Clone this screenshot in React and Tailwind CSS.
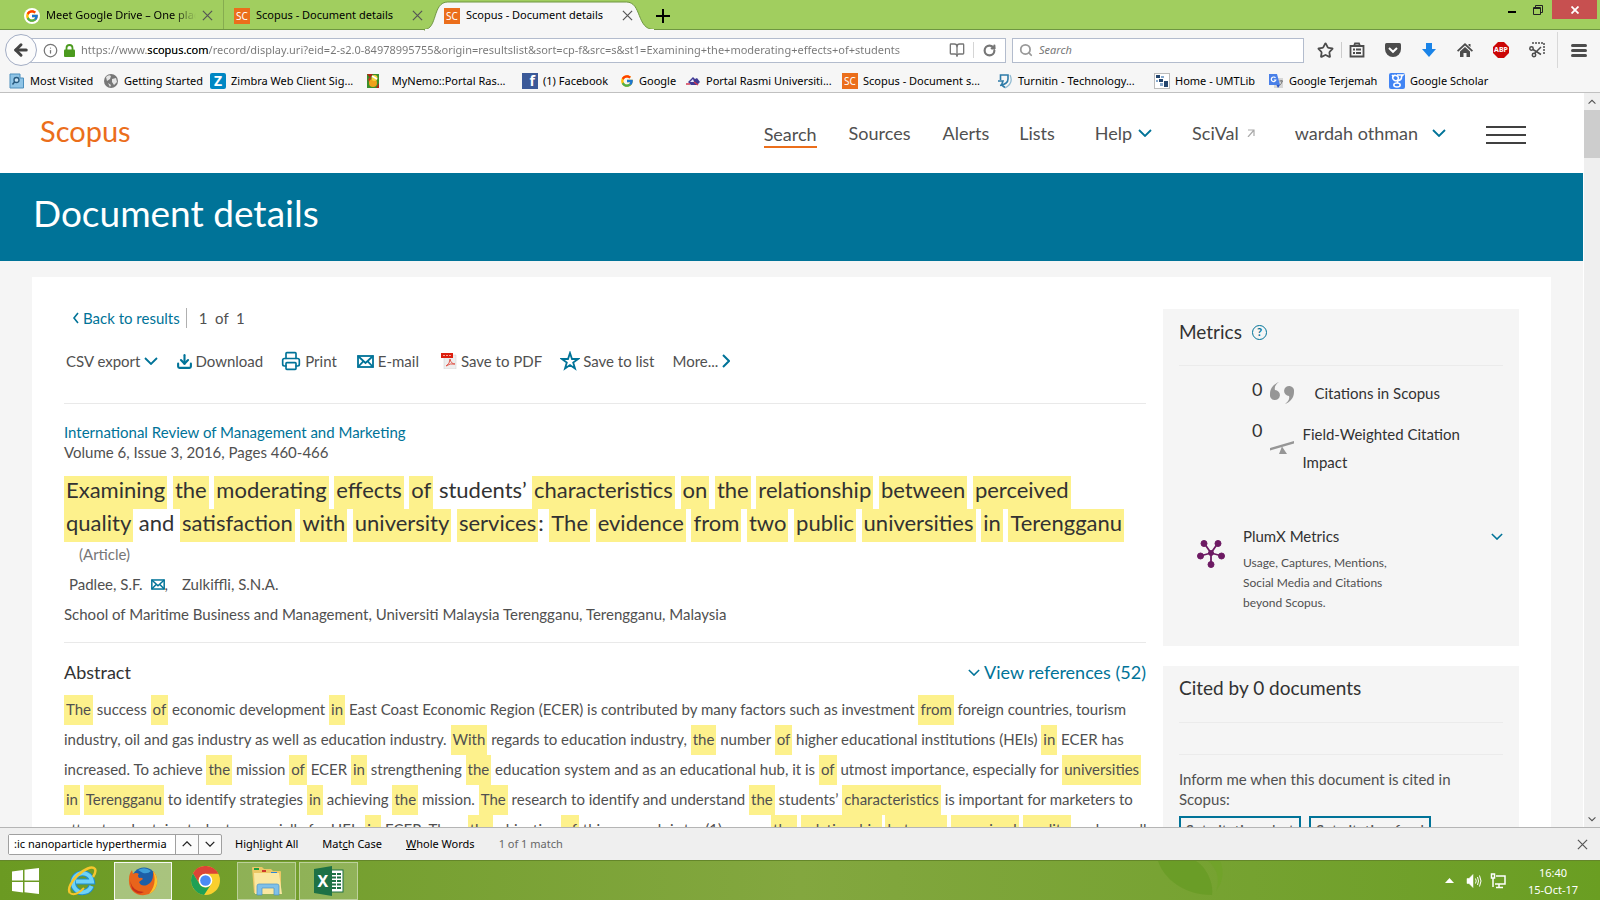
import React from 'react';
import { Star, ArrowLeft, Printer, Download, RotateCw, Search, BookOpen, Info } from 'lucide-react';
import { FcGoogle } from 'react-icons/fc';

const TEAL = '#007398';

const bookmarks = [
  { icon: 'visited', label: 'Most Visited', width: 'w-[94px]' },
  { icon: 'globe', label: 'Getting Started', width: 'w-[107px]' },
  { icon: 'zimbra', label: 'Zimbra Web Client Sig...', width: 'w-[155px]' },
  { icon: 'nemo', label: '\u00a0 MyNemo::Portal Ras...', width: 'w-[157px]' },
  { icon: 'facebook', label: '(1) Facebook', width: 'w-[98px]' },
  { icon: 'google', label: 'Google', width: 'w-[65px]' },
  { icon: 'portal', label: 'Portal Rasmi Universiti...', width: 'w-[157px]' },
  { icon: 'scopus', label: 'Scopus - Document s...', width: 'w-[155px]' },
  { icon: 'turnitin', label: 'Turnitin - Technology...', width: 'w-[157px]' },
  { icon: 'umt', label: 'Home - UMTLib', width: 'w-[114px]' },
  { icon: 'translate', label: 'Google Terjemah', width: 'w-[121px]' },
  { icon: 'scholar', label: 'Google Scholar', width: 'w-[101px]' },
];

// words in [brackets] are search hits
const titleLines = [
  '[Examining] [the] [moderating] [effects] [of] students’ [characteristics] [on] [the] [relationship] [between] [perceived]',
  '[quality] and [satisfaction] [with] [university] [services]: [The] [evidence] [from] [two] [public] [universities] [in] [Terengganu]',
];

const abstractLines = [
  '[The] success [of] economic development [in] East Coast Economic Region (ECER) is contributed by many factors such as investment [from] foreign countries, tourism',
  'industry, oil and gas industry as well as education industry. [With] regards to education industry, [the] number [of] higher educational institutions (HEIs) [in] ECER has',
  'increased. To achieve [the] mission [of] ECER [in] strengthening [the] education system and as an educational hub, it is [of] utmost importance, especially for [universities]',
  '[in] [Terengganu] to identify strategies [in] achieving [the] mission. [The] research to identify and understand [the] students’ [characteristics] is important for marketers to',
  'attract and retain students especially for HEIs [in] ECER. Thus, [the] objective [of] this research is to: (1) assess [the] [relationship] [between] [perceived] [quality] and overall',
];

function Highlighted({ text, pad }) {
  return text.split(/(\[[^\]]+\])/).map((part, i) =>
    part.startsWith('[') ? (
      <mark key={i} className={`inline-block bg-[#fdf18c] px-[2px] text-inherit ${pad}`}>{part.slice(1, -1)}</mark>
    ) : (
      <span key={i}>{part}</span>
    )
  );
}

function Chevron({ className = 'w-[14px] h-2', dir = 'down', color = TEAL }) {
  const d = { down: 'M1 1 L7 7 L13 1', up: 'M1 7 L7 1 L13 7' }[dir];
  return (
    <svg className={`shrink-0 ${className}`} viewBox="0 0 14 8" fill="none" stroke={color} strokeWidth="1.800">
      <path d={d} />
    </svg>
  );
}

function SideChevron({ right }) {
  return (
    <svg className="w-2 h-[14px] shrink-0" viewBox="0 0 8 14" fill="none" stroke={TEAL} strokeWidth={right ? 2 : 1.6}>
      <path d={right ? 'M1 1 L7 7 L1 13' : 'M6 2 L2 7 L6 12'} />
    </svg>
  );
}

function CloseX({ className = 'w-[11px] h-[11px]', color = '#555' }) {
  return (
    <svg className={`shrink-0 ${className}`} viewBox="0 0 12 12" stroke={color} strokeWidth="1.300">
      <path d="M1 1 L11 11 M11 1 L1 11" />
    </svg>
  );
}

function ScopusIcon() {
  return <span className="flex w-4 h-4 shrink-0 items-center justify-center bg-[#eb6e1b] text-[10px] leading-4 text-white">SC</span>;
}

function MailIcon({ className = 'w-[17px] h-[13px]' }) {
  return (
    <svg className={`shrink-0 ${className}`} viewBox="0 0 17 13" fill="none" stroke={TEAL} strokeWidth="1.800">
      <rect x="1" y="1" width="15" height="11" />
      <path d="M1 1 L8.500 8 L16 1 M1 12 L6.500 6.200 M16 12 L10.500 6.200" />
    </svg>
  );
}

function BookmarkIcon({ name }) {
  switch (name) {
    case 'visited':
      return (
        <svg className="w-4 h-4 shrink-0" viewBox="0 0 16 16">
          <path d="M1 1 H11 V5 H14.500 V15 H1 Z" fill="#8fc4e6" stroke="#4d8fbd" />
          <circle cx="7.500" cy="7" r="2.500" fill="#c5e3f6" stroke="#27597f" strokeWidth="1.300" />
          <path d="M5.700 8.800 L3.500 11.500" stroke="#27597f" strokeWidth="1.500" />
        </svg>
      );
    case 'globe':
      return (
        <svg className="w-4 h-4 shrink-0" viewBox="0 0 16 16">
          <circle cx="8" cy="8" r="7" fill="#777" />
          <path d="M3 4 Q6 1 8 3 L7 6 L4 8 Z M9 6 L13 5 L14 9 L11 12 L9 9 Z M5 10 L8 12 L7 14 Z" fill="#e4e4e4" />
        </svg>
      );
    case 'zimbra':
      return <span className="flex w-4 h-4 shrink-0 items-center justify-center rounded-xs bg-[#0087c3] text-sm leading-4 font-bold text-white">Z</span>;
    case 'nemo':
      return (
        <svg className="w-4 h-4 shrink-0" viewBox="0 0 16 16">
          <rect x="2" y="1" width="12" height="14" fill="#3b8f2b" />
          <path d="M2 1 H8 L5 5 Z M11 15 H14 V10 Z" fill="#b02817" />
          <path d="M3 6 L6 4 L5 12 Z" fill="#c8321c" />
          <circle cx="8" cy="10" r="4" fill="#f0a31b" />
          <circle cx="9.500" cy="5" r="3" fill="#f4d33c" />
          <path d="M7 3 L12 6" stroke="#fff" strokeWidth="1.500" />
        </svg>
      );
    case 'facebook':
      return <span className="flex w-4 h-4 shrink-0 items-center justify-end bg-[#3b5998] pr-[3px] text-sm leading-4 font-bold text-white">f</span>;
    case 'google':
      return <FcGoogle className="w-[14px] h-[14px] shrink-0" />;
    case 'portal':
      return (
        <svg className="w-4 h-4 shrink-0" viewBox="0 0 16 16">
          <path d="M3 9 L8 4 L10 6 L12 5 L15 9 L12 12 H6 Z" fill="#3f3a94" />
          <path d="M5 9 L8 6 L9 9 Z" fill="#e9e6f5" />
          <path d="M1 11 H5 M9 9 L13 12" stroke="#d23a54" strokeWidth="1.500" />
        </svg>
      );
    case 'scopus':
      return <ScopusIcon />;
    case 'turnitin':
      return (
        <svg className="w-4 h-4 shrink-0" viewBox="0 0 16 16" fill="none" stroke="#2e7ba8" strokeWidth="1.600">
          <path d="M3.500 7 V2 H11 V6 Q11 11 3 12.500" />
          <path d="M1 8 H6 L4.500 12 L8 14.500" />
          <path d="M13 2 Q17 10 8 15" stroke="#8fb9d0" strokeWidth="1.200" />
        </svg>
      );
    case 'umt':
      return (
        <svg className="w-4 h-4 shrink-0" viewBox="0 0 16 16">
          <rect x=".5" y=".5" width="15" height="15" fill="#fff" stroke="#bbb" />
          <path d="M2 2 H6 V5 H2 Z M5 6 H9 V9 H5 Z M10 8 H14 V14 H10 Z" fill="#24466e" />
          <path d="M7 3 H10 V5 H7 Z M2 7 H4 V9 H2 Z M6 10 H9 V13 H6 Z" fill="#87a9cd" />
        </svg>
      );
    case 'translate':
      return (
        <svg className="w-4 h-4 shrink-0" viewBox="0 0 16 16">
          <rect x="6" y="5" width="9" height="10" fill="#d6d6d6" />
          <path d="M1 1 H9 L12 12 H1 Z" fill="#4a80e8" />
          <path d="M8.500 12 H12 L10 15 Z" fill="#2a56c6" />
          <path d="M7.500 5 A2.300 2.300 0 1 0 7.800 7 H5.800" fill="none" stroke="#fff" strokeWidth="1.200" />
          <path d="M11.500 8 H15 M13.200 7 V8 M14.300 8 Q13.500 11 11.800 12" fill="none" stroke="#777" />
        </svg>
      );
    default:
      return (
        <svg className="w-4 h-4 shrink-0" viewBox="0 0 16 16">
          <rect width="16" height="16" rx="2" fill="#4285f4" />
          <ellipse cx="6.500" cy="5" rx="3" ry="2.500" transform="rotate(35 6.500 5)" fill="none" stroke="#fff" strokeWidth="1.500" />
          <ellipse cx="8" cy="12" rx="3.200" ry="2" fill="none" stroke="#fff" strokeWidth="1.500" />
          <path d="M8 2 H14 L12.500 3.500 Q13 7 8.500 8 V10 M3 2 L5 4" fill="none" stroke="#fff" strokeWidth="1.500" />
        </svg>
      );
  }
}

function TabBar() {
  return (
    <div className="flex h-[30px] shrink-0 items-stretch bg-[#a1ce5f] text-black">
      <div className="flex flex-1 items-stretch border-b border-[#6f9642]">
        <div className="flex w-56 items-center border-r border-[#86ac50] pl-6 pr-[10px] pt-[2px]">
          <span className="flex w-4 h-4 items-center justify-center rounded-full bg-white">
            <FcGoogle className="w-[14px] h-[14px]" />
          </span>
          <span className="ml-[6px] w-[150px] overflow-hidden whitespace-nowrap bg-linear-to-r from-black from-85% to-transparent bg-clip-text text-transparent">Meet Google Drive – One place</span>
          <button className="ml-auto" aria-label="Close tab"><CloseX /></button>
        </div>
        <div className="flex w-[206px] items-center gap-[6px] pl-[10px] pr-[7px] pt-[2px]">
          <ScopusIcon />
          <span className="whitespace-nowrap">Scopus - Document details</span>
          <button className="ml-auto" aria-label="Close tab"><CloseX /></button>
        </div>
        <div className="relative -mb-px flex w-[226px] items-center gap-[6px] pl-[14px] pr-[23px] pt-px">
          <svg className="absolute inset-0 w-full h-full overflow-visible" viewBox="0 0 228 30" preserveAspectRatio="none">
            <path d="M-6 29.500 C8 29.500 2 2 18 2 H198 C214 2 208 29.500 226 29.500 V30 H-6 Z" fill="#f6f6f6" stroke="#6f9642" />
            <rect x="-5" y="29" width="231" height="2" fill="#f6f6f6" />
          </svg>
          <span className="relative"><ScopusIcon /></span>
          <span className="relative whitespace-nowrap">Scopus - Document details</span>
          <button className="relative ml-auto" aria-label="Close tab"><CloseX /></button>
        </div>
        <button className="flex items-center pt-[2px]" aria-label="New tab">
          <svg className="w-[14px] h-[14px]" viewBox="0 0 14 14" stroke="#000" strokeWidth="2">
            <path d="M7 0 V14 M0 7 H14" />
          </svg>
        </button>
        <div className="ml-auto flex h-[19px] items-center pr-[3px]">
          <button className="flex h-[19px] w-6 items-center justify-center pt-1" aria-label="Minimize">
            <span className="h-[2px] w-2 bg-black" />
          </button>
          <button className="flex w-7 justify-center" aria-label="Restore">
            <svg className="w-[10px] h-[10px]" viewBox="0 0 10 10" fill="none" stroke="#222">
              <path d="M.5 2.500 H7.500 V9.500 H.5 Z M.5 3.500 H7.500 M2.500 2.500 V.5 H9.500 V7.500 H7.500" />
            </svg>
          </button>
          <button className="flex h-[19px] w-[45px] items-center justify-center bg-[#c75050]" aria-label="Close window">
            <svg className="w-2 h-2" viewBox="0 0 8 8" stroke="#fff" strokeWidth="1.800"><path d="M.5 .5 L7.500 7.500 M7.500 .5 L.5 7.500" /></svg>
          </button>
        </div>
      </div>
    </div>
  );
}

function NavBar() {
  return (
    <div className="flex h-10 shrink-0 items-center bg-[#f6f6f6] pl-[5px] pr-[13px]">
      <button className="relative z-10 flex w-8 h-8 shrink-0 items-center justify-center rounded-full border border-[#a3adc4] bg-[#fbfbfb]" aria-label="Back">
        <ArrowLeft className="w-[18px] h-[18px] text-[#444]" strokeWidth={4} />
      </button>
      <div className="-ml-2 flex h-[25px] flex-1 items-center border border-[#b3bccd] bg-white pl-[13px] text-[#767676]">
        <Info className="w-[15px] h-[15px] shrink-0" strokeWidth={2} />
        <svg className="ml-[6px] w-[11px] h-[13px] shrink-0" viewBox="0 0 11 13">
          <rect y="5.500" width="11" height="7.500" rx="1" fill="#4b9a1e" />
          <path d="M2.500 6 V4 A3 3 0 0 1 8.500 4 V6" fill="none" stroke="#4b9a1e" strokeWidth="1.800" />
        </svg>
        <div className="ml-[6px] flex-1 w-0 overflow-hidden whitespace-nowrap bg-linear-to-r from-[#767676] from-96% to-transparent bg-clip-text text-transparent">
          https://www.<span className="text-black">scopus.com</span>/record/display.uri?eid=2-s2.0-84978995755&amp;origin=resultslist&amp;sort=cp-f&amp;src=s&amp;st1=Examining+the+moderating+effects+of+students
        </div>
        <BookOpen className="ml-5 w-4 h-4 shrink-0" />
        <span className="ml-2 h-4 w-px bg-[#d5d5d5]" />
        <button className="px-[9px]" aria-label="Reload"><RotateCw className="w-[13px] h-[13px]" strokeWidth={4} /></button>
      </div>
      <label className="ml-[6px] flex h-[25px] w-[292px] shrink-0 items-center gap-[6px] border border-[#b3bccd] bg-white px-[6px] text-[#999]">
        <Search className="w-[14px] h-[14px]" strokeWidth={3} />
        <input className="flex-1 outline-none placeholder:italic placeholder:text-[#777]" placeholder="Search" aria-label="Search" />
      </label>
      <div className="flex shrink-0 items-center text-[#4c4c4c]">
        <button className="ml-[13px]" aria-label="Bookmark"><Star className="w-[17px] h-[17px]" strokeWidth={2.5} /></button>
        <span className="mx-[7px] h-4 w-px bg-[#ccc]" />
        <button aria-label="Bookmarks list">
          <svg className="w-4 h-4" viewBox="0 0 16 16" fill="none" stroke="currentColor" strokeWidth="1.800">
            <path d="M1.500 4 H14.500 V14.500 H1.500 Z M5 4 L6 1.500 H10 L11 4" />
            <path d="M4 7.500 H6 M7 7.500 H12 M4 11 H6 M7 11 H12" />
          </svg>
        </button>
        <button className="ml-5" aria-label="Pocket">
          <svg className="w-4 h-4" viewBox="0 0 16 16">
            <path d="M1.500 1 H14.500 Q16 1 16 2.500 V7 A8 8 0 0 1 0 7 V2.500 Q0 1 1.500 1 Z" fill="currentColor" />
            <path d="M4 6 L8 9.800 L12 6" fill="none" stroke="#fff" strokeWidth="2" />
          </svg>
        </button>
        <button className="ml-5" aria-label="Downloads">
          <svg className="w-4 h-4" viewBox="0 0 16 16"><path d="M5 1 H11 V7 H15 L8 15 L1 7 H5 Z" fill="#1a84e8" /></svg>
        </button>
        <button className="ml-5" aria-label="Home">
          <svg className="w-4 h-4" viewBox="0 0 16 16" fill="currentColor">
            <path d="M8 1 L16 8.500 L14.800 9.800 L8 3.500 L1.200 9.800 L0 8.500 Z M11.500 2 H13.500 V5 L11.500 3.500 Z" />
            <path d="M3 9.500 L8 5 L13 9.500 V15 H9.500 V11 H6.500 V15 H3 Z" />
          </svg>
        </button>
        <button className="relative ml-5 flex w-4 h-4 items-center justify-center text-[7px] font-bold text-white" aria-label="Adblock Plus">
          <svg className="absolute inset-0 w-4 h-4" viewBox="0 0 16 16"><path d="M5 0 H11 L16 5 V11 L11 16 H5 L0 11 V5 Z" fill="#cb0606" /></svg>
          <span className="relative">ABP</span>
        </button>
        <button className="ml-5" aria-label="Screenshot">
          <svg className="w-4 h-4" viewBox="0 0 16 16" fill="none" stroke="currentColor" strokeWidth="1.500">
            <path d="M3 1 H15 V13" strokeDasharray="2 1" />
            <circle cx="2.500" cy="6.500" r="1.700" />
            <circle cx="5" cy="13" r="1.700" />
            <path d="M4 7.500 L12 12.500 M5.500 11.500 L12 5" />
          </svg>
        </button>
        <span className="ml-3 mr-[13px] h-9 w-px bg-[#d8d8d8]" />
        <button className="flex w-4 flex-col gap-[2px]" aria-label="Menu">
          <span className="h-[3px] rounded-full bg-current" />
          <span className="h-[3px] rounded-full bg-current" />
          <span className="h-[3px] rounded-full bg-current" />
        </button>
      </div>
    </div>
  );
}

function SiteHeader() {
  return (
    <header className="flex h-20 items-center bg-white pl-10 pr-[57px] text-[#505050]">
      <a href="#home" className="pb-1 text-[29px] text-[#eb6e1b]">Scopus</a>
      <nav className="ml-auto flex items-center text-lg leading-6">
        <a href="#search" className="mt-[3px] border-b-2 border-[#eb6e1b]">Search</a>
        <a href="#sources" className="ml-8">Sources</a>
        <a href="#alerts" className="ml-8">Alerts</a>
        <a href="#lists" className="ml-[30px]">Lists</a>
        <button className="ml-10 flex items-center gap-[6px]">Help <Chevron /></button>
        <a href="#scival" className="ml-10 flex items-center gap-2">
          SciVal
          <svg className="w-2 h-2" viewBox="0 0 8 8" fill="none" stroke="#aaa" strokeWidth="1.200">
            <path d="M1 1 H7 V7 M7 1 L1 8" />
          </svg>
        </a>
        <button className="ml-10 flex items-center gap-[14px]">wardah othman <Chevron /></button>
        <button className="ml-10 mt-1 flex w-10 flex-col gap-[6px]" aria-label="Main menu">
          <span className="h-[2px] bg-[#404040]" />
          <span className="h-[2px] bg-[#404040]" />
          <span className="h-[2px] bg-[#404040]" />
        </button>
      </nav>
    </header>
  );
}

function Toolbar() {
  return (
    <div className="mt-[22px] flex h-6 items-center pl-[2px]">
      <button className="flex items-center gap-1">CSV export <Chevron /></button>
      <button className="ml-[18px] flex items-center gap-[2px]">
        <Download className="w-[17px] h-[17px] text-[#007398]" strokeWidth={3} /> Download
      </button>
      <button className="ml-[18px] flex items-center gap-1">
        <Printer className="w-5 h-5 text-[#007398]" strokeWidth={2} /> Print
      </button>
      <button className="ml-5 flex items-center gap-1"><MailIcon /> E-mail</button>
      <button className="ml-[22px] flex items-center gap-1">
        <svg className="w-4 h-4" viewBox="0 0 16 16">
          <path d="M3 2 H15 V16 H3 Z" fill="#eee" stroke="#ccc" strokeWidth=".5" />
          <rect width="12" height="5" fill="#dc1f0e" />
          <path d="M2 2.500 H10" stroke="#f5a49c" strokeDasharray="2 1" />
          <path d="M5 13 Q9 11 9 6 Q10 11 14 11 Q9 10 5 13" fill="none" stroke="#e0584c" />
        </svg>
        Save to PDF
      </button>
      <button className="ml-[18px] flex items-center gap-[3px]">
        <svg className="w-5 h-5" viewBox="0 0 20 20" fill="none" stroke={TEAL} strokeWidth="1.800">
          <path d="M10 2 L12 8 H18 L13.200 11.600 L15 17.500 L10 14 L5 17.500 L6.800 11.600 L2 8 H8 Z" />
        </svg>
        Save to list
      </button>
      <button className="ml-[18px] flex items-center gap-1">More... <SideChevron right /></button>
    </div>
  );
}

function Article() {
  return (
    <article className="flex-1 min-w-0">
      <div className="flex h-[18px] items-center pl-2">
        <a href="#results" className="flex items-center gap-[3px] text-[#007398]"><SideChevron /> Back to results</a>
        <span className="ml-[6px] mr-3 h-5 w-px bg-[#b0b0b0]" />
        <span className="whitespace-pre">1  of  1</span>
      </div>
      <Toolbar />
      <div className="mt-[30px] border-t border-[#e9e9e9] pt-[18px] leading-5">
        <a href="#source" className="block text-[#007398]">International Review of Management and Marketing</a>
        <p>Volume 6, Issue 3, 2016, Pages 460-466</p>
      </div>
      <h2 className="mt-[14px] whitespace-nowrap text-[22px] leading-[27px] text-[#323232]">
        {titleLines.map((line) => <span key={line} className="block"><Highlighted text={line} pad="pb-[6px]" /></span>)}
      </h2>
      <p className="mt-[2px] pl-[15px] leading-5 text-[#767676]">(Article)</p>
      <p className="mt-[10px] flex items-center pl-[5px] leading-5">
        Padlee, S.F.
        <a href="#mail" className="ml-2" aria-label="Mail author"><MailIcon className="w-[14px] h-[11px]" /></a>
        ,<span className="ml-[14px]">Zulkiffli, S.N.A.</span>
      </p>
      <p className="mt-[10px] leading-5">School of Maritime Business and Management, Universiti Malaysia Terengganu, Terengganu, Malaysia</p>
      <div className="mt-[18px] flex items-center justify-between border-t border-[#e9e9e9] pt-[17px] text-lg leading-6">
        <h3 className="text-[#323232]">Abstract</h3>
        <a href="#references" className="flex items-center gap-1 text-[#007398]">
          <Chevron className="w-3 h-[7px]" /> View references (52)
        </a>
      </div>
      <p className="mt-[11px] whitespace-nowrap leading-7">
        {abstractLines.map((line) => <span key={line} className="block"><Highlighted text={line} pad="pb-[2px]" /></span>)}
      </p>
    </article>
  );
}

function Sidebar() {
  return (
    <aside className="w-[356px] shrink-0 text-[#323232]">
      <section className="h-[337px] bg-[#f5f5f5] px-4 pt-3">
        <h3 className="flex h-[22px] items-center gap-[10px] text-[19px]">
          Metrics
          <span className="flex w-[15px] h-[15px] items-center justify-center rounded-full border border-[#007398] text-[11px] font-bold text-[#007398]">?</span>
        </h3>
        <div className="mt-[22px] border-t border-[#ebebeb] pt-[13px] pl-[73px]">
          <div className="flex h-7 items-center">
            <span className="mb-2 text-lg leading-5">0</span>
            <svg className="ml-2 w-6 h-[22px]" viewBox="0 0 24 22" fill="#969696">
              <path d="M9 0 C4 2 0 6 0 12 A5 5 0 1 0 5 8 C4 5 6 2 9 0 Z" />
              <path d="M15 22 C20 20 24 16 24 10 A5 5 0 1 0 19 14 C20 17 18 20 15 22 Z" />
            </svg>
            <span className="ml-5">Citations in Scopus</span>
          </div>
          <div className="mt-[13px] flex items-start leading-7">
            <span className="text-lg leading-5">0</span>
            <svg className="ml-2 mt-5 w-6 h-[14px] shrink-0" viewBox="0 0 24 14" fill="#969696">
              <path d="M0 8 L24 1 V3.500 L0 10.500 Z M12 6.500 L17 14 H9 Z" />
            </svg>
            <span className="ml-2">Field-Weighted Citation<br />Impact</span>
          </div>
        </div>
        <div className="mt-[50px] flex pl-[18px]">
          <svg className="mt-[14px] w-7 h-7 shrink-0" viewBox="0 0 28 28" fill="#6d1a63" stroke="#6d1a63">
            <path d="M14 13 L7 3 M14 13 L21 3 M14 13 L3 16 M14 13 L25 16 M14 13 V25" strokeWidth="1.800" />
            <circle cx="14" cy="13" r="2.500" />
            <circle cx="7" cy="3.500" r="3" />
            <circle cx="21" cy="3.500" r="3" />
            <circle cx="3.500" cy="16" r="3" />
            <circle cx="24.500" cy="16" r="3" />
            <circle cx="14" cy="24.500" r="3" />
          </svg>
          <div className="ml-[18px]">
            <h4 className="leading-5">PlumX Metrics</h4>
            <p className="mt-[7px] text-xs leading-5 text-[#505050]">Usage, Captures, Mentions,<br />Social Media and Citations<br />beyond Scopus.</p>
          </div>
          <button className="ml-auto self-start pt-[7px]" aria-label="Expand PlumX metrics"><Chevron className="w-3 h-[7px]" /></button>
        </div>
      </section>
      <section className="mt-5 bg-[#f5f5f5] px-4 pt-[11px] pb-10">
        <h3 className="text-[19px] leading-[22px]">Cited by 0 documents</h3>
        <div className="mt-[23px] h-[33px] border-y border-[#ebebeb]" />
        <p className="mt-[14px] leading-5 text-[#505050]">Inform me when this document is cited in<br />Scopus:</p>
        <div className="mt-[7px] flex gap-2 leading-6 text-[#505050]">
          <button className="w-[122px] whitespace-nowrap border-2 border-[#007398]">Set citation alert</button>
          <button className="w-[122px] whitespace-nowrap border-2 border-[#007398]">Set citation feed</button>
        </div>
      </section>
    </aside>
  );
}

function FindBar() {
  return (
    <div className="flex h-[33px] shrink-0 items-center border-t border-[#b5b5b5] bg-[#efefef] pl-2 pr-3 text-black">
      <div className="flex h-[21px] items-stretch rounded-xs border border-[#a0a0a0] bg-[#fbfbfb]">
        <input className="w-[166px] bg-white pl-[5px] pr-1 outline-none" aria-label="Find in page" defaultValue=":ic nanoparticle hyperthermia" />
        <button className="flex w-[23px] items-center justify-center border-l border-[#a0a0a0]" aria-label="Previous"><Chevron className="w-[10px] h-[6px]" dir="up" color="#222" /></button>
        <button className="flex w-[23px] items-center justify-center border-l border-[#a0a0a0]" aria-label="Next"><Chevron className="w-[10px] h-[6px]" color="#222" /></button>
      </div>
      <button className="ml-[13px]">High<u>l</u>ight All</button>
      <button className="ml-6">Mat<u>c</u>h Case</button>
      <button className="ml-6"><u>W</u>hole Words</button>
      <span className="ml-6 text-[#666]">1 of 1 match</span>
      <button className="ml-auto" aria-label="Close find bar"><CloseX className="w-[11px] h-[11px]" /></button>
    </div>
  );
}

function TaskBar() {
  return (
    <footer className="relative flex h-10 shrink-0 items-center border-t border-[#64862a] bg-linear-to-r from-[#6b9a22] via-[#83a73f] to-[#6a9e22] pl-3 pr-5 text-white">
      <svg className="absolute left-[72%] top-0 w-[90px] h-[39px]" viewBox="0 0 90 39">
        <path d="M6 0 C12 18 32 34 60 34 C62 20 52 4 44 0 Z" fill="#639a20" opacity=".6" />
        <path d="M56 0 C66 8 68 20 64 30 C72 20 72 8 68 0 Z" fill="#6ea326" opacity=".6" />
      </svg>
      <button aria-label="Start">
        <svg className="w-[27px] h-[26px]" viewBox="0 0 27 26" fill="#fff">
          <path d="M0 3.500 L11 2 V12.500 H0 Z M12.500 1.800 L27 0 V12.500 H12.500 Z M0 14 H11 V24.500 L0 23 Z M12.500 14 H27 V26 L12.500 24.200 Z" />
        </svg>
      </button>
      <button className="ml-7" aria-label="Internet Explorer">
        <svg className="w-[30px] h-[30px]" viewBox="0 0 30 30" fill="none">
          <path d="M24.500 20 A9.500 9.500 0 1 1 25 15.500 H9" stroke="#1f8fd0" strokeWidth="6" />
          <path d="M24.500 20 A9.500 9.500 0 1 1 25 15.500 H9" stroke="#6fd3f8" strokeWidth="4" />
          <path d="M3 27 C-3 18 22 -4 28 3 C29 5 28 8 26 11" stroke="#f6c62c" strokeWidth="2.500" />
          <path d="M3 27 C7 30 13 26 17 22" stroke="#f6c62c" strokeWidth="2" />
        </svg>
      </button>
      <button className="ml-[17px] flex h-[38px] w-[58px] items-center justify-center border border-white/90 bg-white/40" aria-label="Firefox">
        <svg className="w-[30px] h-[30px]" viewBox="0 0 30 30">
          <circle cx="16" cy="14" r="12.500" fill="#1d5fa8" />
          <path d="M10 4 Q17 0 23 5 Q20 8 15 7 Z" fill="#3d9ed8" />
          <path d="M25 5 C32 12 30 24 21 28 C10 32 0 25 1 13 C1 9 2 7 4 4 L5 8 Q8 6 11 8 Q9 9 11 12 Q14 11 15 13 L11 16 Q13 21 19 19 Q26 16 25 5 Z" fill="#e8641b" />
          <path d="M25 5 C32 12 30 24 21 28 C27 21 28 13 25 5 Z" fill="#fbc42d" />
          <path d="M2 15 Q5 26 16 26 Q10 30 4 23 Z" fill="#c73018" />
        </svg>
      </button>
      <button className="ml-[19px]" aria-label="Chrome">
        <svg className="w-[29px] h-[29px]" viewBox="0 0 30 30">
          <circle cx="15" cy="15" r="15" fill="#f9cf2e" />
          <path d="M2 7.500 A15 15 0 0 1 28.300 8 H15 A7 7 0 0 0 8.500 18 Z" fill="#dc4437" />
          <path d="M2 7.500 A15 15 0 0 0 13.500 29.900 L20.500 19.500 A7 7 0 0 1 8.500 18 Z" fill="#1fa055" />
          <circle cx="15" cy="15" r="7" fill="#fff" />
          <circle cx="15" cy="15" r="5.500" fill="#4a8af4" />
        </svg>
      </button>
      <button className="ml-[17px] flex h-[38px] w-[59px] items-center justify-center border border-white/40 bg-white/20" aria-label="File Explorer">
        <svg className="w-8 h-[30px]" viewBox="0 0 32 30">
          <path d="M1 2 Q1 1 2 1 H11 L13 3 H20 L22 5 H29 Q30 5 30 6 V27 H3 Z" fill="#ecc765" />
          <path d="M3 2 H8 V4 H3 Z" fill="#1f9e3c" />
          <path d="M11 4 H15 V6 H11 Z" fill="#cf3a2a" />
          <path d="M20 6 H26 V8 H20 Z" fill="#2c86d4" />
          <path d="M3 7 H28 L31 28 H4 Z" fill="#fae7a0" />
          <path d="M6 29 V20 Q6 18 8 18 H26 Q28 18 28 20 V29 H23 V22 H11 V29 Z" fill="#7fc0e8" stroke="#4c94c6" strokeWidth=".7" />
        </svg>
      </button>
      <button className="ml-[3px] flex h-[38px] w-[59px] items-center justify-center border border-white/40 bg-white/20" aria-label="Excel">
        <span className="relative flex w-[30px] h-[30px] items-center">
          <svg className="absolute inset-0 w-[30px] h-[30px]" viewBox="0 0 30 30">
            <rect x="15" y="4" width="14" height="22" fill="#fff" stroke="#1e7145" />
            <path d="M18 8 H22 M23 8 H27 M18 11.500 H22 M23 11.500 H27 M18 15 H22 M23 15 H27 M18 18.500 H22 M23 18.500 H27 M18 22 H22 M23 22 H27" stroke="#1e7145" strokeWidth="2" />
            <path d="M0 3 L18 0 V30 L0 27 Z" fill="#1e7145" />
          </svg>
          <span className="relative pl-1 text-base font-bold">X</span>
        </span>
      </button>
      <div className="relative ml-auto flex items-center">
        <svg className="w-[9px] h-[5px]" viewBox="0 0 9 5" fill="#fff"><path d="M4.500 0 L9 5 H0 Z" /></svg>
        <svg className="ml-3 w-4 h-4" viewBox="0 0 16 16" fill="#fff" stroke="#fff">
          <path d="M1 5.500 H3 L7 1.500 V14.500 L3 10.500 H1 Z" strokeWidth=".5" />
          <path d="M9.500 5.500 Q11 8 9.500 10.500 M11.500 4 Q13.500 8 11.500 12 M13.500 2.500 Q16.500 8 13.500 13.500" fill="none" />
        </svg>
        <svg className="ml-2 w-4 h-4" viewBox="0 0 16 16" fill="none" stroke="#fff" strokeWidth="1.500">
          <path d="M6 3 H15 V11 H5 M9 11 V14 M6 14.500 H13" />
          <path d="M1.500 1 H4.500 V5 H1.500 Z M3 5 V14" />
        </svg>
        <div className="ml-5 w-[54px] whitespace-nowrap text-center leading-[17px]">16:40<br />15-Oct-17</div>
      </div>
    </footer>
  );
}

export default function App() {
  return (
    <div className="flex h-screen flex-col overflow-hidden bg-[#f6f6f6] font-['Noto_Sans',sans-serif] text-[11px]">
      <TabBar />
      <NavBar />
      <div className="flex h-[23px] shrink-0 items-center overflow-hidden border-b border-[#c0c0c0] pl-[9px] text-black">
        {bookmarks.map((b) => (
          <a key={b.icon} href={`#${b.icon}`} className={`flex shrink-0 items-center gap-[5px] whitespace-nowrap ${b.width}`}>
            <BookmarkIcon name={b.icon} />
            {b.label}
          </a>
        ))}
      </div>
      <div className="flex min-h-0 flex-1">
        <main className="min-w-0 flex-1 overflow-hidden bg-[#f5f5f5] font-[Lato,sans-serif] text-[15px] text-[#505050]">
          <SiteHeader />
          <div className="flex h-[88px] items-center bg-[#007398] pl-[33px] pb-2">
            <h1 className="text-[37px] text-white">Document details</h1>
          </div>
          <div className="mx-8 mt-4 flex gap-[17px] bg-white p-8">
            <Article />
            <Sidebar />
          </div>
        </main>
        <div className="flex w-[17px] shrink-0 flex-col items-center border-l border-white bg-[#efefef]">
          <div className="flex h-[17px] items-center"><Chevron className="w-2 h-[6px]" dir="up" color="#505050" /></div>
          <div className="h-12 w-full bg-[#cdcdcd]" />
          <div className="mt-auto flex h-[17px] items-center"><Chevron className="w-2 h-[6px]" color="#505050" /></div>
        </div>
      </div>
      <FindBar />
      <TaskBar />
    </div>
  );
}
